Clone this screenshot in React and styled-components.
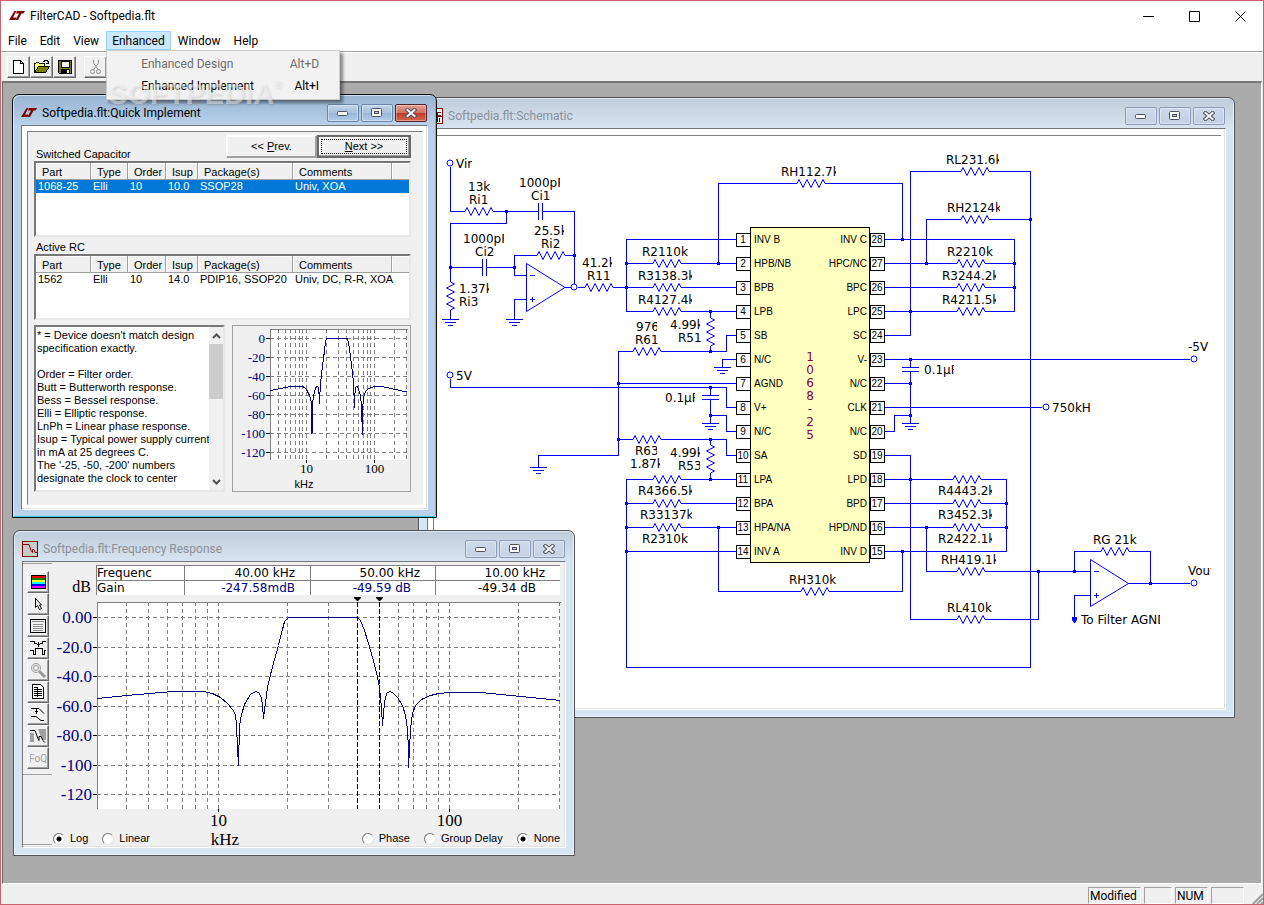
import React from "react";
import styled, { createGlobalStyle } from "styled-components";

const UI = '"Roboto", "Open Sans", sans-serif';
const SANS = '"Liberation Sans", Arial, sans-serif';
const SERIF = '"Liberation Serif", "Times New Roman", serif';
const WIDE = '"DejaVu Sans", Verdana, sans-serif';

const GlobalStyle = createGlobalStyle`
  * { box-sizing: border-box; }
  html, body, #root { height: 100%; margin: 0; }
  body { font: 12px/16px ${UI}; color: #000; overflow: hidden; }
  button, input, textarea { font: inherit; color: inherit; margin: 0; padding: 0; }
  ul { list-style: none; margin: 0; padding: 0; }
  svg { display: block; }
`;

/* ---------- application frame ---------- */

const Frame = styled.div`
  display: flex;
  flex-direction: column;
  height: 100vh;
  background: #f0f0f0;
  border: 1px solid #c9626c;
`;

const TitleBar = styled.header`
  display: flex;
  align-items: center;
  height: 30px;
  padding-left: 8px;
  background: #fff;
`;

const AppTitle = styled.h1`
  flex: 1;
  margin: 0 0 0 5px;
  font-size: 12px;
  font-weight: 400;
`;

const CaptionButton = styled.button`
  display: grid;
  place-items: center;
  width: 46px;
  height: 30px;
  border: 0;
  background: transparent;
`;

const MenuBar = styled.nav`
  display: flex;
  gap: 1px;
  height: 20px;
  padding-left: 1px;
  background: #fff;
`;

const MenuSlot = styled.div`
  position: relative;
`;

const MenuButton = styled.button`
  height: 19px;
  padding: 0 5px;
  border: 1px solid ${(p) => (p.$open ? "#99d1ff" : "transparent")};
  background: ${(p) => (p.$open ? "#cce8ff" : "transparent")};
`;

const DropDown = styled.ul`
  position: absolute;
  z-index: 30;
  top: 19px;
  left: 0;
  width: 234px;
  padding: 2px 0;
  background: #f2f2f2;
  border: 1px solid #ccc;
  box-shadow: 3px 3px 3px rgba(0, 0, 0, 0.45);
`;

const DropItem = styled.button`
  display: flex;
  justify-content: space-between;
  align-items: center;
  width: 100%;
  height: 22px;
  padding: 0 20px 0 34px;
  border: 0;
  background: transparent;
  color: ${(p) => (p.disabled ? "#6d6d6d" : "#000")};
`;

const Watermark = styled.div`
  position: absolute;
  z-index: 40;
  top: 49px;
  left: 2px;
  font: 700 29px/29px ${SANS};
  color: rgba(255, 255, 255, 0.45);
  text-shadow: 1px 1px 2px rgba(120, 120, 120, 0.25);
  white-space: nowrap;
  pointer-events: none;
  sup {
    font-size: 10px;
    line-height: 10px;
    vertical-align: top;
  }
`;

const ToolBar = styled.div`
  display: flex;
  align-items: center;
  height: 30px;
  padding-left: 6px;
  border-top: 1px solid #a0a0a0;
  box-shadow: inset 0 1px #fff;
`;

const ToolButton = styled.button`
  display: grid;
  place-items: center;
  width: ${(p) => (p.$narrow ? 22 : 23)}px;
  height: 22px;
  margin-left: ${(p) => (p.$apart ? 8 : 0)}px;
  border: 1px solid;
  border-color: #fff #696969 #696969 #fff;
  background: #f0f0f0;
  box-shadow: inset -1px -1px #a0a0a0;
`;

const Workspace = styled.main`
  position: relative;
  flex: 1;
  margin: 0 1px;
  overflow: hidden;
  background: #ababab;
  border-style: solid;
  border-width: 2px 1px 1px;
  border-color: #777 #fff #fff #696969;
`;

const StatusBar = styled.footer`
  display: flex;
  align-items: center;
  justify-content: flex-end;
  gap: 3px;
  height: 20px;
  padding-top: 2px;
`;

const StatusCell = styled.div`
  width: ${(p) => p.$w}px;
  height: 17px;
  padding-left: 1px;
  border: 1px solid;
  border-color: #a0a0a0 #fff #fff #a0a0a0;
  line-height: 16px;
`;

const Grip = styled.div`
  align-self: flex-end;
  margin-left: 5px;
`;

/* ---------- child windows ---------- */

const WindowBox = styled.section`
  position: absolute;
  left: ${(p) => p.$x}px;
  top: ${(p) => p.$y}px;
  z-index: ${(p) => p.$z};
  display: flex;
  flex-direction: column;
  width: ${(p) => p.$w}px;
  height: ${(p) => p.$h}px;
  padding: 0 8px 7px;
  border: 1px solid ${(p) => (p.$active ? "#111" : "#50545a")};
  border-radius: 7px 7px 0 0;
  background: ${(p) =>
    p.$active
      ? "linear-gradient(#98b3d1, #b9d1ea 30px, #b9d1ea)"
      : "linear-gradient(#bfcddb, #d7e4f2 30px, #d7e4f2)"};
  box-shadow: inset 1px 1px #fff8, inset -1px -1px ${(p) => (p.$active ? "#2fd0e8" : "#eef4fa")};
`;

const WindowTitle = styled.div`
  display: flex;
  flex: none;
  align-items: center;
  gap: 2px;
  height: 30px;
  padding: 6px 1px 0 0;
  color: ${(p) => (p.$active ? "#000" : "#8c9199")};
`;

const WindowName = styled.h2`
  flex: 1;
  margin: 0;
  padding-left: 3px;
  font-size: 12px;
  font-weight: 400;
`;

const WindowButton = styled.button`
  display: grid;
  place-items: center;
  width: 32px;
  height: 18px;
  border: 1px solid ${(p) => (p.$red ? "#5b1f24" : p.$active ? "#6a86ab" : "#8a9cba")};
  border-radius: 2px;
  background: ${(p) =>
    p.$red
      ? "linear-gradient(#e3a196, #d0705f 48%, #bd3c26 50%, #d1664a)"
      : p.$active
      ? "linear-gradient(#c3d5ea, #a8c1de 48%, #98b5d7 50%, #b4cde8)"
      : "linear-gradient(#cddaea, #c4d2e4)"};
  box-shadow: inset 0 0 0 1px rgba(255, 255, 255, 0.35);
`;

const WindowBody = styled.div`
  flex: 1;
  min-height: 0;
  border: 1px solid;
  border-color: #777 #fff #fff #777;
  background: ${(p) => (p.$gray ? "#f0f0f0" : "#fff")};
  box-shadow: inset -1px -1px #e3e3e3;
`;

/* ---------- quick implement ---------- */

const Panel = styled.div`
  height: 374px;
  margin: 5px 4px 0 5px;
  padding: 3px 11px 0 6px;
  border: 1px solid;
  border-color: #808080 #f0f0f0 #f0f0f0 #808080;
  background: #f0f0f0;
  font: 11px/13px ${SANS};
`;

const PanelHead = styled.div`
  display: flex;
  justify-content: space-between;
  align-items: flex-end;
  height: 26px;
`;

const Caption = styled.div`
  padding-left: 2px;
`;

const StepButtons = styled.div`
  display: flex;
  align-self: flex-start;
`;

const StepButton = styled.button`
  width: ${(p) => (p.$default ? 94 : 91)}px;
  height: 23px;
  border: ${(p) => (p.$default ? "2px solid #696969" : "1px solid")};
  ${(p) => !p.$default && "border-color: #fff #a0a0a0 #a0a0a0 #fff;"}
  background: #f0f0f0;
  outline: ${(p) => (p.$default ? "1px dotted #000" : "none")};
  outline-offset: -5px;
  box-shadow: inset -1px -1px #a0a0a0, inset 1px 1px #fff;
`;

const Sunken = styled.div`
  height: ${(p) => p.$h}px;
  margin-bottom: ${(p) => p.$gap || 0}px;
  border: 2px solid;
  border-color: #777 #e8e8e8 #e8e8e8 #777;
  background: #fff;
  overflow: hidden;
`;

const PartTable = styled.table`
  width: 100%;
  table-layout: fixed;
  border-collapse: separate;
  border-spacing: 0;
  th {
    height: 17px;
    padding: 2px 0 0 6px;
    border-right: 1px solid #a0a0a0;
    border-bottom: 1px solid #a0a0a0;
    background: #f0f0f0;
    box-shadow: inset 1px 1px #fff;
    font-weight: 400;
    line-height: 14px;
    text-align: left;
    white-space: nowrap;
  }
  th:last-child { border-right: 0; }
  td {
    height: 13px;
    padding: 0 0 0 2px;
    white-space: nowrap;
    line-height: 13px;
  }
`;

const PartRow = styled.tr`
  background: ${(p) => (p.$selected ? "#0078d7" : "transparent")};
  color: ${(p) => (p.$selected ? "#fff" : "#000")};
`;

const LowerRow = styled.div`
  display: flex;
  justify-content: space-between;
`;

const NotesBox = styled.div`
  display: flex;
  width: 191px;
  height: 167px;
  border: 2px solid;
  border-color: #777 #e8e8e8 #e8e8e8 #777;
  background: #fff;
`;

const Notes = styled.textarea`
  flex: 1;
  min-width: 0;
  padding: 2px 0 0 1px;
  border: 0;
  outline: 0;
  resize: none;
  overflow: hidden;
  white-space: pre;
  background: #fff;
`;

const ScrollTrack = styled.div`
  display: flex;
  flex-direction: column;
  justify-content: space-between;
  width: 14px;
  background: #f0f0f0;
`;

const ScrollArrow = styled.button`
  display: grid;
  place-items: center;
  height: 17px;
  border: 0;
  background: transparent;
`;

const ScrollThumb = styled.div`
  height: 55px;
  margin-bottom: 74px;
  background: #cdcdcd;
`;

const MiniChart = styled.div`
  width: 179px;
  height: 167px;
  border: 1px solid #a0a0a0;
`;

/* ---------- frequency response ---------- */

const FreqLayout = styled.div`
  display: flex;
  height: 100%;
`;

const ToolStrip = styled.div`
  display: flex;
  flex-direction: column;
  width: 29px;
  margin: 1px 0 2px;
  border-top: 1px solid #a0a0a0;
  border-bottom: 1px solid #a0a0a0;
`;

const StripGroup = styled.div`
  padding: 7px 0 5px 4px;
  border-bottom: 1px solid #a0a0a0;
`;

const FreqMain = styled.div`
  flex: 1;
  display: flex;
  flex-direction: column;
`;

const ReadoutRow = styled.div`
  display: flex;
  padding: 3px 5px 2px 0;
`;

const Unit = styled.div`
  width: 44px;
  padding: 13px 5px 0 0;
  text-align: right;
  font: 16px/17px ${SERIF};
`;

const Readout = styled.table`
  flex: 1;
  table-layout: fixed;
  border-spacing: 0;
  background: #fff;
  font: 12px/14px ${WIDE};
  td, th {
    height: 15px;
    padding: 0 15px 0 0;
    border-top: 1px solid #808080;
    border-left: 1px solid #808080;
    font-weight: 400;
    text-align: right;
    white-space: nowrap;
    overflow: hidden;
  }
  th { padding: 0; text-align: left; }
`;

const Value = styled.td`
  color: ${(p) => (p.$blue ? "#000080" : "#000")};
  && { padding-right: ${(p) => (p.$short ? 24 : 15)}px; }
`;

const RadioRow = styled.div`
  display: flex;
  align-items: center;
  justify-content: space-between;
  height: 17px;
  padding: 0 5px 0 1px;
  font: 11px/13px ${SANS};
`;

const RadioGroup = styled.div`
  display: flex;
  gap: ${(p) => p.$gap}px;
`;

const RadioLabel = styled.label`
  display: flex;
  align-items: center;
  gap: 5px;
`;

const Radio = styled.input`
  appearance: none;
  width: 12px;
  height: 12px;
  border: 1px solid;
  border-color: #777 #e3e3e3 #e3e3e3 #777;
  border-radius: 50%;
  background: ${(p) =>
    p.defaultChecked ? "radial-gradient(#000 0 2px, #fff 3px)" : "#fff"};
`;

const AxisUnit = styled.span`
  margin: 0 84px 0 22px;
  padding-top: 2px;
  font: 17px/15px ${SERIF};
`;

/* ---------- drawings ---------- */

const LtLogo = () => (
  <svg width="16" height="10" viewBox="0 0 16 10" fill="#800000" aria-hidden="true">
    <path d="M5.500 0h2L4 6.500h3.500L6.500 9H0z" />
    <path d="M8 0h8l-1.500 2.500h-2L9 9H6.500l3.500-6.500H7z" />
  </svg>
);

const SchematicIcon = () => (
  <svg width="16" height="16" viewBox="0 0 16 16" aria-hidden="true" shapeRendering="crispEdges">
    <rect x=".5" y=".5" width="15" height="15" fill="#fff" stroke="#800000" />
    <path d="M2 4h12M2 8h5m2 0h6M10 4v3h4M10 9v5M12 10v4" stroke="#800000" strokeWidth="1" fill="none" />
  </svg>
);

const ResponseIcon = () => (
  <svg width="16" height="16" viewBox="0 0 16 16" aria-hidden="true">
    <rect x=".5" y=".5" width="15" height="15" fill="#c9c9c9" stroke="#800000" />
    <path d="M1 3.500h6l2 6 1.500 2v-3l1.500 0 1 3h2" stroke="#800000" fill="none" />
  </svg>
);

const NewIcon = () => (
  <svg width="16" height="16" viewBox="0 0 16 16" aria-hidden="true" shapeRendering="crispEdges">
    <path d="M2.500 1.500h7l3 3v10h-10z" fill="#fff" stroke="#000" />
    <path d="M9.500 1.500v3h3" fill="none" stroke="#000" />
  </svg>
);

const OpenIcon = () => (
  <svg width="16" height="16" viewBox="0 0 16 16" aria-hidden="true" shapeRendering="crispEdges">
    <path d="M.5 13.500v-9h1l1-1h2l1 1h5v3" fill="#ffff80" stroke="#000" />
    <path d="M.5 13.500l4-6h11l-4 6z" fill="#808000" stroke="#000" />
    <path d="M9 2.500h1l1-1h2l1 1v2M12 4.500h3M14.500 2v3" fill="none" stroke="#000" />
  </svg>
);

const SaveIcon = () => (
  <svg width="16" height="16" viewBox="0 0 16 16" aria-hidden="true" shapeRendering="crispEdges">
    <path d="M1.500 1.500h13v13h-12l-1-1z" fill="#808000" stroke="#000" />
    <path d="M4 2h8v6H4z" fill="#f0f0f0" stroke="#000" />
    <path d="M4 10h9v5H4z" fill="#000" />
    <path d="M10 11h2v3h-2z" fill="#f0f0f0" />
  </svg>
);

const CutIcon = () => (
  <svg width="16" height="16" viewBox="0 0 16 16" aria-hidden="true" fill="none" stroke="#909090">
    <path d="M5.500 1v3l5 7M10.500 1v3l-5 7" />
    <circle cx="4.500" cy="12.500" r="2" />
    <circle cx="10.500" cy="12.500" r="2" />
  </svg>
);

const MinGlyph = () => (
  <svg width="12" height="6" viewBox="0 0 12 6" aria-hidden="true">
    <rect x=".5" y="1.500" width="10" height="4" rx="1" fill="#f8f8f8" stroke="#4c5262" />
  </svg>
);
const MaxGlyph = () => (
  <svg width="12" height="10" viewBox="0 0 12 10" aria-hidden="true">
    <rect x=".5" y=".5" width="10" height="8" rx="1" fill="#f8f8f8" stroke="#4c5262" />
    <rect x="3.500" y="3.500" width="4" height="2" fill="#b8c8dc" stroke="#4c5262" />
  </svg>
);
const CloseGlyph = () => (
  <svg width="12" height="10" viewBox="0 0 12 10" aria-hidden="true">
    <path d="M2.500 2l7 6m0-6l-7 6" stroke="#4c5262" strokeWidth="4" strokeLinecap="square" />
    <path d="M2.500 2l7 6m0-6l-7 6" stroke="#f8f8f8" strokeWidth="2" strokeLinecap="square" />
  </svg>
);

const Chevron = ({ up }) => (
  <svg width="9" height="6" viewBox="0 0 9 6" aria-hidden="true">
    <path d={up ? "M1 5l3.500-3.500L8 5" : "M1 1l3.500 3.500L8 1"} fill="none" stroke="#505050" strokeWidth="2" />
  </svg>
);

const stripIcons = [
  ["Colours", <g key="c" shapeRendering="crispEdges"><path d="M1 1h15v14H1z" fill="#000" /><path d="M2 3h13" stroke="#f00" strokeWidth="2" /><path d="M2 5h13" stroke="#008000" strokeWidth="2" /><path d="M2 7h13" stroke="#ff0" strokeWidth="2" /><path d="M2 9h13" stroke="#0ff" strokeWidth="2" /><path d="M2 11h13" stroke="#00f" strokeWidth="2" /><path d="M2 13h13" stroke="#f0f" strokeWidth="2" /></g>],
  ["Pointer", <path key="p" d="M5.500 2.500v9l2-2 2 4 2-1-2-3.500h2z" fill="#fff" stroke="#000" />],
  ["Table", <g key="t" shapeRendering="crispEdges" fill="none" stroke="#000"><path d="M.5 1.500h15v13H.5z" /><path d="M2 3.500h12M3 6.500h10M3 8.500h10M3 10.500h10M3 12.500h10" stroke="#909090" /></g>],
  ["Markers", <g key="m" shapeRendering="crispEdges" fill="none" stroke="#000"><path d="M0 1.500h4v2h3m3 0h2v-2h4M8.500 2v5M7 4.500h3M0 10.500h3v4h2v-6h7v6h2v-4h2" /></g>],
  ["Zoom", <g key="z" fill="none" stroke="#989898" strokeWidth="1"><circle cx="6" cy="6" r="4.500" /><circle cx="6" cy="6" r="2.500" /><path d="M9.500 9.500l5.500 5.500" strokeWidth="3" /></g>],
  ["Report", <g key="r" shapeRendering="crispEdges"><path d="M2.500.5h8l3 3v11h-11z" fill="#fff" stroke="#000" /><path d="M4 3.500h4M4 5.500h8M4 7.500h8M4 9.500h8M4 11.500h8M7.500 3v10" stroke="#000" /></g>],
  ["Slope", <g key="s" fill="none" stroke="#000"><path d="M1 2.500h8l5 5M1 10.500h5l5 4h3M6.500 3v5M5 5.500h3" /></g>],
  ["Window", <g key="w"><path d="M0 5h4v9H0zM8 1h8v11h-4z" fill="#a0a0a0" /><path d="M0 2.500h5l3 8 1 2v-4l2 0 2 4 2 2" fill="none" stroke="#000" /></g>],
  ["FoQ", <text key="f" x="8" y="12" fontSize="10" textAnchor="middle" fontFamily="Roboto, sans-serif" fill="#a0a0a0">FoQ</text>],
];

/* Filter magnitude, as decades above 3 kHz (x, in 1/231) and attenuation (y, in 1/1.476 dB). */
const response = [
  [0, 81], [29, 78], [52, 76], [75, 74], [93, 74], [106, 74], [115, 76], [123, 80], [130, 86], [135, 92],
  [138, 97], [139, 108], [140, 130], [141, 148], [142, 108], [144, 97], [147, 87], [153, 77], [158, 74],
  [161, 75], [164, 80], [165, 88], [166, 101], [168, 85], [170, 70], [173, 57], [177, 42], [181, 28],
  [185, 12], [187, 4], [191, 0], [260, 0], [263, 3], [267, 13], [271, 26], [277, 47], [280, 60], [282, 70],
  [284, 90], [285, 108], [287, 85], [289, 76], [292, 74], [295, 75], [300, 80], [305, 88], [308, 98],
  [310, 112], [311, 132], [311, 150], [312, 132], [313, 112], [315, 96], [318, 88], [324, 82], [333, 78],
  [341, 76], [353, 75], [383, 75], [403, 77], [433, 80], [463, 83],
];

const decadeLines = [3, 4, 5, 6, 7, 8, 9, 10, 20, 30, 40, 50, 60, 70, 80, 90, 100, 200, 300];

function ResponsePlot({ left, top, width, height, zero, step, decade, labels, size, markers }) {
  const x = (f) => Math.round(left + decade * Math.log10(f / 3)) + 0.5;
  const y = (i) => Math.round(zero + i * step) + 0.5;
  const kx = decade / 231;
  const ky = step / 29.5;
  const points = response.map(([a, b]) => `${left + 0.5 + a * kx},${zero + 0.5 + b * ky}`).join(" ");
  const bottom = top + height;
  return (
    <g>
      <rect x={left} y={top} width={width} height={height} fill="#fff" />
      <g stroke="#808080" strokeDasharray="4 3" shapeRendering="crispEdges">
        {decadeLines.map((f) => <path key={f} d={`M${x(f)} ${top}V${bottom}`} />)}
        {labels.map((t, i) => <path key={t} d={`M${left} ${y(i)}h${width}`} />)}
      </g>
      <path d={`M${left + 0.5} ${bottom}V${top + 0.5}h${width}`} fill="none" stroke="#808080" shapeRendering="crispEdges" />
      <path d={labels.map((t, i) => `M${left - 4} ${y(i)}h4`).join("") + `M${x(10)} ${bottom}v3M${x(100)} ${bottom}v3`} stroke="#000" shapeRendering="crispEdges" />
      <polyline points={points} fill="none" stroke="#000080" shapeRendering="crispEdges" />
      {markers && markers.map((m) => (
        <g key={m}>
          <path d={`M${m + 0.5} ${top}V${bottom}`} stroke="#000" strokeDasharray="5 2" shapeRendering="crispEdges" />
          <path d={`M${m - 3} ${top - 6}h7v2l-3 3h-1l-3-3z`} fill="#000" />
        </g>
      ))}
      <g fontFamily={SERIF} fontSize={size} fill="#000080" textAnchor="end">
        {labels.map((t, i) => <text key={t} x={left - 5} y={y(i) + Math.floor(size / 3)}>{t}</text>)}
      </g>
      <g fontFamily={SERIF} fontSize={size} textAnchor="middle">
        <text x={x(10)} y={bottom + size}>10</text>
        <text x={x(100)} y={bottom + size}>100</text>
      </g>
    </g>
  );
}

/* Schematic parts */

const wires = [
  "M450.500 167V211.500H464M493 211.500H538M543 211.500H574.500V284M506.500 211.500V223.500H450.500V281M450.500 310V319",
  "M450.500 267.500H482M487 267.500H514.500M536 255.500H514.500V275.500H526M565 255.500H574.500M526 299.500H514.500V319",
  "M565 287.500H571M578 287.500H584M613 287.500H652M681 287.500H736",
  "M736 239.500H626.500V311.500H652M681 311.500H736M626.500 263.500H652M681 263.500H736",
  "M718.500 263.500V183.500H796M825 183.500H902.500V239.500",
  "M632 351.500H618.500V455.500H538.500V467M661 351.500H726.500V335.500H736M710.500 311.500V318M710.500 346V351",
  "M736 359.500H722.500V367M618.500 383.500H736M450.500 379V387.500H726.500V407.500H736",
  "M710.500 387V395M710.500 400V423M710.500 415.500H726.500V431.500H736",
  "M618.500 439.500H632M661 439.500H726.500V455.500H736M710.500 439V444M710.500 473V479",
  "M652 479.500H626.500V667.500H1030.500V171.500H989M681 479.500H736M626.500 503.500H652M681 503.500H736",
  "M626.500 527.500H652M681 527.500H736M626.500 551.500H736M718.500 527V591.500H800M829 591.500H902.500V551",
  "M885 335.500H910.500V171.500H960M960 219.500H926.500V263.500M989 219.500H1030.500",
  "M885 239.500H1014.500V311.500H985M885 263.500H956M985 263.500H1014M885 287.500H956M985 287.500H1014M885 311.500H956",
  "M885 359.500H1190M910.500 359V367M910.500 372V423M885 383.500H910M885 407.500H1042M885 431.500H894.500V415.500H910",
  "M885 455.500H910.500V619.500H956M985 619.500H1038.500V571.500M885 479.500H952M981 479.500H1006.500V551.500H885",
  "M885 503.500H952M981 503.500H1006M885 527.500H952M981 527.500H1006M926.500 527V571.500H956M985 571.500H1090",
  "M1100 551.500H1074.500V571M1129 551.500H1150.500V583M1128 583.500H1190M1090 595.500H1074.500V618",
  /* capacitor plates */
  "M538.500 203V220M542.500 203V220M482.500 259V276M486.500 259V276M702 395.500H719M702 399.500H719M902 367.500H919M902 371.500H919",
  /* amplifier input signs */
  "M530 275.500h5M530 299.500h5M532.500 297v5M1094 571.500h5M1094 595.500h5M1096.500 593v5",
].join("");

const zigzagH = [
  [464, 211], [536, 255], [584, 287], [652, 263], [652, 287], [652, 311], [632, 351], [632, 439], [652, 479],
  [652, 503], [652, 527], [796, 183], [800, 591], [960, 171], [960, 219], [956, 263], [956, 287], [956, 311],
  [952, 479], [952, 503], [952, 527], [956, 571], [956, 619], [1100, 551],
];
const zigzagV = [[450, 281], [710, 317], [710, 444]];
const grounds = [[450, 319], [514, 319], [722, 367], [710, 423], [538, 467], [910, 423]];
const joints = [
  [506, 211], [450, 267], [514, 267], [574, 255], [626, 263], [626, 287], [718, 263], [710, 311], [710, 351],
  [618, 383], [710, 387], [710, 415], [618, 439], [710, 439], [710, 479], [626, 503], [626, 527], [626, 551],
  [718, 527], [902, 239], [926, 263], [1014, 263], [1014, 287], [910, 311], [1030, 219], [910, 359], [910, 383],
  [910, 415], [910, 479], [1006, 503], [1006, 527], [926, 527], [902, 551], [1038, 571], [1074, 571], [1150, 583],
];
const terminals = [[450, 163], [574, 287], [450, 375], [1194, 359], [1046, 407], [1194, 583]];

/* x, baseline, text, width of the label's box (text beyond it is cut) */
const labels = [
  [456, 168, "Vin", 16], [468, 191, "13k"], [469, 204, "Ri1"], [519, 187, "1000pF", 41], [531, 200, "Ci1"],
  [534, 235, "25.5k", 30], [541, 248, "Ri2", 19], [463, 243, "1000pF", 41], [475, 256, "Ci2", 19],
  [582, 267, "41.2k", 30], [587, 280, "R11"], [459, 293, "1.37k", 30], [459, 306, "Ri3", 19],
  [642, 256, "R2110k"], [638, 280, "R3138.3k", 54], [638, 304, "R4127.4k", 54], [636, 331, "976", 21],
  [635, 344, "R61"], [670, 329, "4.99k", 30], [678, 342, "R51"], [456, 380, "5V"], [665, 402, "0.1µF", 30],
  [635, 455, "R63", 22], [630, 468, "1.87k", 30], [670, 457, "4.99k", 30], [678, 470, "R53", 22],
  [638, 495, "R4366.5k", 54], [640, 519, "R33137k", 52], [642, 543, "R2310k"], [781, 176, "RH112.7k", 55],
  [946, 164, "RL231.6k", 53], [947, 212, "RH2124k", 53], [947, 256, "R2210k"], [942, 280, "R3244.2k", 54],
  [942, 304, "R4211.5k", 54], [924, 374, "0.1µF", 30], [1052, 412, "750kHz", 39], [1188, 351, "-5V"],
  [938, 495, "R4443.2k", 54], [938, 519, "R3452.3k", 54], [938, 543, "R2422.1k", 54], [941, 564, "RH419.1k", 55],
  [947, 612, "RL410k"], [789, 584, "RH310k"], [1093, 544, "RG 21k"], [1188, 575, "Vout", 23],
  [1081, 624, "To Filter AGND", 79],
];

const pinsLeft = ["INV B", "HPB/NB", "BPB", "LPB", "SB", "N/C", "AGND", "V+", "N/C", "SA", "LPA", "BPA", "HPA/NA", "INV A"];
const pinsRight = ["INV C", "HPC/NC", "BPC", "LPC", "SC", "V-", "N/C", "CLK", "N/C", "SD", "LPD", "BPD", "HPD/ND", "INV D"];

const Schematic = () => (
  <svg width="796" height="580" viewBox="428 129 796 580" role="img" aria-label="Filter schematic">
    <path d="M433.500 709V135.500H1221" fill="none" stroke="#808080" />
    <g fill="none" stroke="#00f" shapeRendering="crispEdges">
      <path d={wires} />
      {zigzagH.map(([x, y]) => <path key={`${x}-${y}`} shapeRendering="auto" d={`M${x} ${y + 0.5}h1l2-4 4 8 4-8 4 8 4-8 4 8 4-8 2 4`} />)}
      {zigzagV.map(([x, y]) => <path key={`${x}-${y}`} shapeRendering="auto" d={`M${x + 0.5} ${y}v1l4 2-8 4 8 4-8 4 8 4-8 4 8 4-4 2`} />)}
      {grounds.map(([x, y]) => <path key={`${x}-${y}`} d={`M${x - 8} ${y + 0.5}h17M${x - 5} ${y + 3.5}h11M${x - 2} ${y + 6.5}h5`} />)}
      <path shapeRendering="auto" d="M526.500 263.500v48L565 287.500zM1090.500 559.500v47l38-23z" />
    </g>
    <g fill="#00f">
      {joints.map(([x, y]) => <rect key={`${x}-${y}`} x={x - 1} y={y - 1} width="3" height="3" />)}
      <path d="M1072 617h5v3l-2 3h-1l-2-3z" />
    </g>
    <g fill="#fff" stroke="#00f">
      {terminals.map(([x, y]) => <circle key={`${x}-${y}`} cx={x} cy={y} r="3" />)}
    </g>
    <rect x="750.500" y="227.500" width="119" height="335" fill="#ffffc0" stroke="#000" />
    <g fontFamily={SANS} fontSize="10">
      {pinsLeft.map((name, i) => (
        <g key={i}>
          <rect x="736.500" y={233.5 + 24 * i} width="14" height="13" fill="#fff" stroke="#000" />
          <text x="743" y={243 + 24 * i} textAnchor="middle">{i + 1}</text>
          <text x="754" y={243 + 24 * i}>{name}</text>
        </g>
      ))}
      {pinsRight.map((name, i) => (
        <g key={i}>
          <rect x="870.500" y={233.5 + 24 * i} width="14" height="13" fill="#fff" stroke="#000" />
          <text x="877" y={243 + 24 * i} textAnchor="middle">{28 - i}</text>
          <text x="867" y={243 + 24 * i} textAnchor="end">{name}</text>
        </g>
      ))}
    </g>
    <g fontFamily={WIDE} fontSize="12" fill="#800040" textAnchor="middle">
      {[..."1068-25"].map((c, i) => <text key={i} x="810" y={361 + 13 * i}>{c}</text>)}
    </g>
    <g fontFamily={WIDE} fontSize="12">
      {labels.map(([x, y, text, w]) => (
        <svg key={`${x}-${y}`} x={x} y={y - 12} width={w || 90} height="16">
          <text x="0" y="12">{text}</text>
        </svg>
      ))}
    </g>
  </svg>
);

/* ---------- composed parts ---------- */

function ChildWindow({ x, y, w, h, z, title, icon, active, gray, children }) {
  return (
    <WindowBox $x={x} $y={y} $w={w} $h={h} $z={z} $active={active}>
      <WindowTitle $active={active}>
        {icon}
        <WindowName>{title}</WindowName>
        <WindowButton $active={active} aria-label="Minimize"><MinGlyph /></WindowButton>
        <WindowButton $active={active} aria-label="Maximize"><MaxGlyph /></WindowButton>
        <WindowButton $active={active} $red={active} aria-label="Close"><CloseGlyph /></WindowButton>
      </WindowTitle>
      <WindowBody $gray={gray}>{children}</WindowBody>
    </WindowBox>
  );
}

const partColumns = [["Part", 55], ["Type", 37], ["Order", 38], ["Isup", 32], ["Package(s)", 95], ["Comments", 99], ["", 17]];

function Parts({ row, selected }) {
  return (
    <PartTable>
      <colgroup>{partColumns.map(([n, w]) => <col key={n} width={w} />)}</colgroup>
      <thead><tr>{partColumns.map(([n]) => <th key={n}>{n}</th>)}</tr></thead>
      <tbody>
        <PartRow $selected={selected}>
          {row.map((c, i) => <td key={i}>{c}</td>)}
          <td />
        </PartRow>
      </tbody>
    </PartTable>
  );
}

const notes = `* = Device doesn't match design
specification exactly.

Order = Filter order.
Butt = Butterworth response.
Bess = Bessel response.
Elli = Elliptic response.
LnPh = Linear phase response.
Isup = Typical power supply current
in mA at 25 degrees C.
The '-25, -50, -200' numbers
designate the clock to center`;

const Option = ({ group, text, on }) => (
  <RadioLabel><Radio type="radio" name={group} defaultChecked={on} />{text}</RadioLabel>
);

export default function App() {
  return (
    <Frame>
      <GlobalStyle />
      <TitleBar>
        <LtLogo />
        <AppTitle>FilterCAD - Softpedia.flt</AppTitle>
        <CaptionButton aria-label="Minimize"><svg width="11" height="11"><path d="M0 5.500h11" stroke="#000" /></svg></CaptionButton>
        <CaptionButton aria-label="Maximize"><svg width="11" height="11"><path d="M.5.500h10v10H.5z" fill="none" stroke="#000" /></svg></CaptionButton>
        <CaptionButton aria-label="Close"><svg width="11" height="11"><path d="M.5.500l10 10m0-10l-10 10" stroke="#000" /></svg></CaptionButton>
      </TitleBar>
      <MenuBar>
        <MenuButton>File</MenuButton>
        <MenuButton>Edit</MenuButton>
        <MenuButton>View</MenuButton>
        <MenuSlot>
          <MenuButton $open>Enhanced</MenuButton>
          <DropDown>
            <li><DropItem disabled><span>Enhanced Design</span><span>Alt+D</span></DropItem></li>
            <li><DropItem><span>Enhanced Implement</span><span>Alt+I</span></DropItem></li>
          </DropDown>
          <Watermark aria-hidden="true">SOFTPEDIA<sup>®</sup></Watermark>
        </MenuSlot>
        <MenuButton>Window</MenuButton>
        <MenuButton>Help</MenuButton>
      </MenuBar>
      <ToolBar>
        <ToolButton aria-label="New"><NewIcon /></ToolButton>
        <ToolButton aria-label="Open"><OpenIcon /></ToolButton>
        <ToolButton aria-label="Save"><SaveIcon /></ToolButton>
        <ToolButton $apart aria-label="Cut"><CutIcon /></ToolButton>
      </ToolBar>

      <Workspace>
        <ChildWindow x={415} y={14} w={817} h={621} z={1} title="Softpedia.flt:Schematic" icon={<SchematicIcon />}>
          <Schematic />
        </ChildWindow>

        <ChildWindow x={10} y={447} w={562} h={326} z={2} title="Softpedia.flt:Frequency Response" icon={<ResponseIcon />} gray>
          <FreqLayout>
            <ToolStrip>
              <StripGroup>
                {stripIcons.map(([name, art]) => (
                  <ToolButton key={name} $narrow aria-label={name}>
                    <svg width="17" height="16" viewBox="0 0 17 16">{art}</svg>
                  </ToolButton>
                ))}
              </StripGroup>
            </ToolStrip>
            <FreqMain>
              <ReadoutRow>
                <Unit>dB</Unit>
                <Readout>
                  <colgroup><col width="88" /><col width="126" /><col width="125" /><col width="125" /></colgroup>
                  <tbody>
                    <tr><th scope="row">Frequenc</th><Value>40.00 kHz</Value><Value>50.00 kHz</Value><Value>10.00 kHz</Value></tr>
                    <tr><th scope="row">Gain</th><Value $blue>-247.58mdB</Value><Value $blue $short>-49.59 dB</Value><Value $short>-49.34 dB</Value></tr>
                  </tbody>
                </Readout>
              </ReadoutRow>
              <svg width="513" height="233" viewBox="52 597 513 233" role="img" aria-label="Gain against frequency">
                <ResponsePlot left={97} top={602} width={463} height={207} zero={617} step={29.5} decade={231}
                  labels={["0.00", "-20.0", "-40.0", "-60.0", "-80.0", "-100", "-120"]} size={17} markers={[357, 379]} />
              </svg>
              <RadioRow>
                <RadioGroup $gap={14}>
                  <Option group="scale" text="Log" on />
                  <Option group="scale" text="Linear" />
                </RadioGroup>
                <AxisUnit>kHz</AxisUnit>
                <RadioGroup $gap={14}>
                  <Option group="trace" text="Phase" />
                  <Option group="trace" text="Group Delay" />
                  <Option group="trace" text="None" on />
                </RadioGroup>
              </RadioRow>
            </FreqMain>
          </FreqLayout>
        </ChildWindow>

        <ChildWindow x={9} y={11} w={425} h={424} z={3} title="Softpedia.flt:Quick Implement" icon={<LtLogo />} active>
          <Panel>
            <PanelHead>
              <Caption>Switched Capacitor</Caption>
              <StepButtons>
                <StepButton>&lt;&lt; <u>P</u>rev.</StepButton>
                <StepButton $default><u>N</u>ext &gt;&gt;</StepButton>
              </StepButtons>
            </PanelHead>
            <Sunken $h={76} $gap={4}>
              <Parts row={["1068-25", "Elli", "10", "10.0", "SSOP28", "Univ, XOA"]} selected />
            </Sunken>
            <Caption>Active RC</Caption>
            <Sunken $h={66} $gap={5}>
              <Parts row={["1562", "Elli", "10", "14.0", "PDIP16, SSOP20", "Univ, DC, R-R, XOA"]} />
            </Sunken>
            <LowerRow>
              <NotesBox>
                <Notes readOnly aria-label="Notes" value={notes} />
                <ScrollTrack>
                  <ScrollArrow aria-label="Scroll up"><Chevron up /></ScrollArrow>
                  <ScrollThumb />
                  <ScrollArrow aria-label="Scroll down"><Chevron /></ScrollArrow>
                </ScrollTrack>
              </NotesBox>
              <MiniChart>
                <svg width="176" height="165" viewBox="233 326 176 165" role="img" aria-label="Response preview">
                  <ResponsePlot left={270} top={329} width={137} height={131} zero={338} step={19} decade={68}
                    labels={["0", "-20", "-40", "-60", "-80", "-100", "-120"]} size={13} />
                  <text x="304" y="488" textAnchor="middle" fontFamily={SANS} fontSize="11">kHz</text>
                </svg>
              </MiniChart>
            </LowerRow>
          </Panel>
        </ChildWindow>
      </Workspace>

      <StatusBar>
        <StatusCell $w={53}>Modified</StatusCell>
        <StatusCell $w={28} />
        <StatusCell $w={33}>NUM</StatusCell>
        <StatusCell $w={33} />
        <Grip>
          <svg width="11" height="11"><path d="M1 11L11 1M5 11l6-6M9 11l2-2" stroke="#a0a0a0" strokeWidth="2" /></svg>
        </Grip>
      </StatusBar>
    </Frame>
  );
}
